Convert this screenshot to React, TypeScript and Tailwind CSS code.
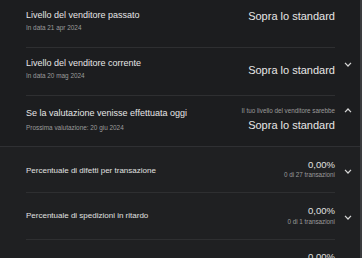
import React from "react";

const Chevron = ({ up = false }: { up?: boolean }) => (
  <svg width="8" height="5" viewBox="0 0 8 5" className="block">
    <path
      d={up ? "M1 4.2 L4 1 L7 4.2" : "M1 0.8 L4 4 L7 0.8"}
      fill="none"
      stroke="#d6d6d6"
      strokeWidth="1.2"
    />
  </svg>
);

export default function App() {
  const font = { fontFamily: '"Liberation Sans", Arial, sans-serif' };
  return (
    <div className="w-[362px] h-[258px] overflow-hidden flex bg-[#1c1d1f]" style={font}>
      <div className="w-[360px] flex flex-col">
        <div className="bg-[#1c1d1f]">
          {/* Row 1 */}
          <div className="flex h-[48px]">
            <div className="ml-[26px] w-[309px] border-b border-[#2e2f31] flex justify-between">
              <div className="pt-[10px]">
                <div className="text-[9px] leading-[11px] text-[#e6e6e6]">Livello del venditore passato</div>
                <div className="text-[6.4px] leading-[8px] mt-[3px] text-[#9b9b9b]">In data 21 apr 2024</div>
              </div>
              <div className="pt-[10px] text-[11px] leading-[13px] text-[#e6e6e6]">Sopra lo standard</div>
            </div>
            <div className="w-[25px]" />
          </div>
          {/* Row 2 */}
          <div className="flex h-[48px]">
            <div className="ml-[26px] w-[309px] border-b border-[#2e2f31] flex justify-between">
              <div className="pt-[10px]">
                <div className="text-[9px] leading-[11px] text-[#e6e6e6]">Livello del venditore corrente</div>
                <div className="text-[6.4px] leading-[8px] mt-[3px] text-[#9b9b9b]">In data 20 mag 2024</div>
              </div>
              <div className="pt-[16px] text-[11px] leading-[13px] text-[#e6e6e6]">Sopra lo standard</div>
            </div>
            <div className="w-[25px] flex justify-center pt-[14px]">
              <Chevron />
            </div>
          </div>
          {/* Row 3 */}
          <div className="flex h-[51px] border-b border-[#2f3033]">
            <div className="ml-[26px] w-[309px] flex justify-between">
              <div className="pt-[12px]">
                <div className="text-[9px] leading-[11px] text-[#e6e6e6]">Se la valutazione venisse effettuata oggi</div>
                <div className="text-[6.4px] leading-[8px] mt-[5px] text-[#9b9b9b]">Prossima valutazione: 20 giu 2024</div>
              </div>
              <div className="pt-[11px] flex flex-col items-end">
                <div className="text-[6.3px] leading-[8px] text-[#9b9b9b]">Il tuo livello del venditore sarebbe</div>
                <div className="text-[11px] leading-[13px] mt-[4px] text-[#e6e6e6]">Sopra lo standard</div>
              </div>
            </div>
            <div className="w-[25px] flex justify-center pt-[12px]">
              <Chevron up />
            </div>
          </div>
        </div>
        <div className="flex-1 bg-[#1f2022]">
          {/* Row 4 */}
          <div className="flex h-[46px]">
            <div className="ml-[26px] w-[309px] border-b border-[#2e2f31] flex justify-between">
              <div className="pt-[19px] text-[8px] leading-[10px] text-[#e0e0e0]">Percentuale di difetti per transazione</div>
              <div className="pt-[12px] flex flex-col items-end">
                <div className="text-[9.5px] leading-[11px] text-[#e0e0e0]">0,00%</div>
                <div className="text-[6.3px] leading-[8px] mt-[1px] text-[#9b9b9b]">0 di 27 transazioni</div>
              </div>
            </div>
            <div className="w-[25px] flex justify-center pt-[22px]">
              <Chevron />
            </div>
          </div>
          {/* Row 5 */}
          <div className="flex h-[47px]">
            <div className="ml-[26px] w-[309px] border-b border-[#2e2f31] flex justify-between">
              <div className="pt-[18px] text-[8px] leading-[10px] text-[#e0e0e0]">Percentuale di spedizioni in ritardo</div>
              <div className="pt-[12px] flex flex-col items-end">
                <div className="text-[9.5px] leading-[11px] text-[#e0e0e0]">0,00%</div>
                <div className="text-[6.3px] leading-[8px] mt-[2px] text-[#9b9b9b]">0 di 1 transazioni</div>
              </div>
            </div>
            <div className="w-[25px] flex justify-center pt-[22px]">
              <Chevron />
            </div>
          </div>
          {/* Row 6 */}
          <div className="flex h-[44px]">
            <div className="ml-[26px] w-[309px] flex justify-end pt-[11px]">
              <div className="text-[9.5px] leading-[11px] text-[#e0e0e0]">0,00%</div>
            </div>
            <div className="w-[25px]" />
          </div>
        </div>
      </div>
      <div className="w-[2px] bg-[#3a3b3d]" />
    </div>
  );
}
